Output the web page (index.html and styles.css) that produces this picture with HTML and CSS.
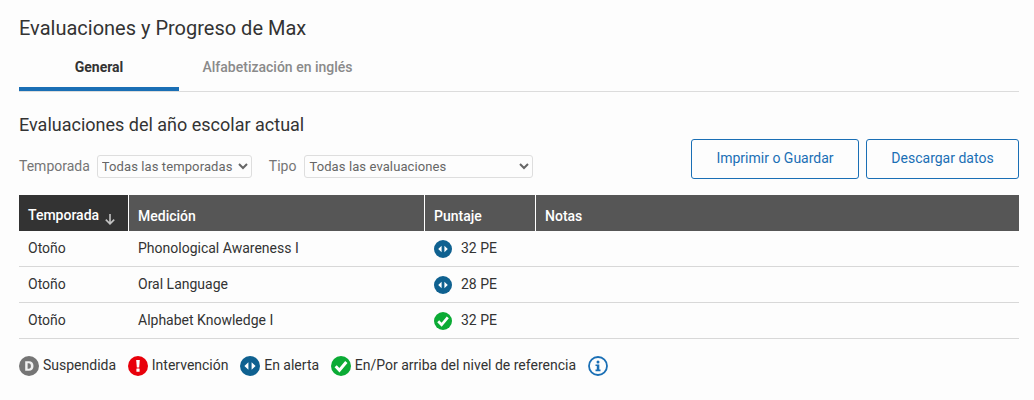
FILE: index.html
```html
<!DOCTYPE html>
<html lang="es">
<head>
<meta charset="utf-8">
<title>Evaluaciones y Progreso de Max</title>
<link rel="stylesheet" href="styles.css">
</head>
<body>
<main class="page">
  <h1 class="title">Evaluaciones y Progreso de Max</h1>
  <nav class="tabs">
    <a class="tab tab-active">General</a>
    <a class="tab">Alfabetización en inglés</a>
  </nav>
  <h2 class="subtitle">Evaluaciones del año escolar actual</h2>
  <div class="toolbar">
    <div class="filters">
      <label class="filter-label">Temporada</label>
      <select class="select select-season"><option>Todas las temporadas</option></select>
      <label class="filter-label label-type">Tipo</label>
      <select class="select select-type"><option>Todas las evaluaciones</option></select>
    </div>
    <div class="actions">
      <button class="btn btn-print">Imprimir o Guardar</button>
      <button class="btn btn-download">Descargar datos</button>
    </div>
  </div>
  <table class="grid">
    <colgroup>
      <col class="col-season"><col class="col-measure"><col class="col-score"><col>
    </colgroup>
    <thead>
      <tr>
        <th class="sorted">Temporada <svg class="sort" viewBox="0 0 12 12" width="12" height="12"><path d="M6 1v9.5M1.8 6.6 6 10.8l4.2-4.2" fill="none" stroke="#c4c4c4" stroke-width="1.6"/></svg></th>
        <th>Medición</th>
        <th>Puntaje</th>
        <th>Notas</th>
      </tr>
    </thead>
    <tbody>
      <tr>
        <td>Otoño</td><td>Phonological Awareness I</td>
        <td><span class="score"><svg class="icon" viewBox="0 0 18 18"><use href="#i-alert"/></svg>32 PE</span></td><td></td>
      </tr>
      <tr>
        <td>Otoño</td><td>Oral Language</td>
        <td><span class="score"><svg class="icon" viewBox="0 0 18 18"><use href="#i-alert"/></svg>28 PE</span></td><td></td>
      </tr>
      <tr>
        <td>Otoño</td><td>Alphabet Knowledge I</td>
        <td><span class="score"><svg class="icon" viewBox="0 0 18 18"><use href="#i-ok"/></svg>32 PE</span></td><td></td>
      </tr>
    </tbody>
  </table>
  <ul class="legend">
    <li class="legend-item"><svg class="icon-lg" viewBox="0 0 20 20"><circle cx="10" cy="10" r="10" fill="#757575"/><path d="M6.2 5.2h3.7c3 0 4.6 2 4.6 4.8s-1.6 4.8-4.6 4.8H6.2zm2.4 2v5.6h1.1c1.5 0 2.2-1.1 2.2-2.8s-.7-2.8-2.2-2.8z" fill="#f0f0f0" fill-rule="evenodd"/></svg>Suspendida</li>
    <li class="legend-item"><svg class="icon-lg" viewBox="0 0 20 20"><circle cx="10" cy="10" r="10" fill="#e8000b"/><path d="M8.2 4h3.6l-.6 7.6H8.8z" fill="#fff"/><rect x="8.4" y="12.6" width="3.2" height="3.2" rx=".5" fill="#fff"/></svg>Intervención</li>
    <li class="legend-item"><svg class="icon-lg" viewBox="0 0 20 20"><use href="#i-alert-lg"/></svg>En alerta</li>
    <li class="legend-item"><svg class="icon-lg" viewBox="0 0 18 18"><use href="#i-ok"/></svg>En/Por arriba del nivel de referencia</li>
    <li class="legend-info"><svg class="icon-lg" viewBox="0 0 20 20"><circle cx="10" cy="10" r="9" fill="none" stroke="#1a6fb5" stroke-width="1.8"/><circle cx="10" cy="5.9" r="1.5" fill="#1a6fb5"/><path d="M7.5 8.4h3.8v5.2h1.2v1.6H7.5v-1.6h1.3V10H7.5z" fill="#1a6fb5"/></svg></li>
  </ul>
</main>
<svg class="defs" width="0" height="0" aria-hidden="true">
  <defs>
    <g id="i-alert"><circle cx="9" cy="9" r="9" fill="#0f6190"/><path d="M7.6 5.8 4.2 9l3.4 3.2zM10.4 5.8 13.8 9l-3.4 3.2z" fill="#fff"/></g>
    <g id="i-alert-lg"><circle cx="10" cy="10" r="10" fill="#0f6190"/><path d="M8.4 6.2 4.4 10l4 3.8zM11.6 6.2l4 3.8-4 3.8z" fill="#fff"/></g>
    <g id="i-ok"><circle cx="9" cy="9" r="9" fill="#0bab35"/><path d="M4.2 9.2 7.6 12.8 13.8 5.4" fill="none" stroke="#fff" stroke-width="2.7"/></g>
  </defs>
</svg>
</body>
</html>
```
FILE: styles.css
```css
* { box-sizing: border-box; }
html, body { margin: 0; padding: 0; }
body {
  background: #fdfdfd;
  color: #333;
  font-family: Roboto, "Liberation Sans", sans-serif;
  font-size: 14px;
}
.page { width: 1034px; height: 400px; padding: 15px 15px 0 19px; overflow: hidden; }
.title { margin: 0; font-size: 20px; font-weight: 400; line-height: 26px; color: #333; }
.tabs { display: flex; height: 51px; border-bottom: 1px solid #dcdcdc; }
.tab { width: 160px; height: 50px; padding-top: 17px; text-align: center; font-size: 14px; line-height: 18px; color: #8a8a8a; font-weight: 500; }
.tab-active { color: #333; font-weight: 700; border-bottom: 4px solid #1a6fb5; }
.tab + .tab { width: 197px; }
.subtitle { margin: 21px 0 0; font-size: 18px; font-weight: 400; line-height: 24px; color: #333; }
.toolbar { display: flex; justify-content: space-between; margin-top: 2px; height: 41px; }
.filters { display: flex; align-items: center; padding-top: 13px; height: 41px; }
.filter-label { color: #757575; font-size: 14px; }
.label-type { margin-left: 17px; }
.select {
  height: 23px;
  margin-left: 8px;
  padding: 0;
  background: #fdfdfd;
  border: 1px solid #dedede;
  border-radius: 3px;
  color: #666;
  font-family: Roboto, "Liberation Sans", sans-serif;
  font-size: 13px;
  letter-spacing: .1px;
}
.select-season { width: 155px; margin-left: 7px; }
.select-type { width: 229px; }
.actions { display: flex; gap: 7px; }
.btn {
  height: 40px;
  padding-bottom: 4px;
  background: #fdfdfd;
  border: 1px solid #1a6fb5;
  border-radius: 3px;
  color: #1a6fb5;
  font-family: Roboto, "Liberation Sans", sans-serif;
  font-size: 14px;
}
.btn-print { width: 168px; }
.btn-download { width: 153px; }
.grid { width: 1000px; margin-top: 15px; border-collapse: separate; border-spacing: 0; table-layout: fixed; }
.col-season { width: 109px; }
.col-measure { width: 296px; }
.col-score { width: 111px; }
.grid th {
  height: 36px;
  padding: 6px 9px 0;
  background: #565656;
  border-left: 1px solid #fff;
  color: #fff;
  font-size: 14px;
  font-weight: 500;
  text-align: left;
}
.grid th:first-child { border-left: 0; }
.grid th.sorted { background: #333; }
.sort { vertical-align: -5px; margin-left: 1px; }
.grid td {
  height: 36px;
  padding: 0 9px 2px;
  border-bottom: 1px solid #d8d8d8;
  font-size: 14px;
  color: #333;
}
.grid td:nth-child(n+2) { padding-left: 10px; }
.score { display: flex; align-items: center; gap: 9px; }
.icon { width: 18px; height: 18px; flex: none; margin-top: 2px; }
.icon-lg { width: 20px; height: 20px; flex: none; margin-top: 2px; }
.legend { display: flex; align-items: flex-start; list-style: none; margin: 15px 0 0; padding: 0; }
.legend-item { display: flex; align-items: center; gap: 4px; margin-right: 11.7px; font-size: 14px; color: #333; }
.legend-info { display: flex; }
.defs { position: absolute; }
```
